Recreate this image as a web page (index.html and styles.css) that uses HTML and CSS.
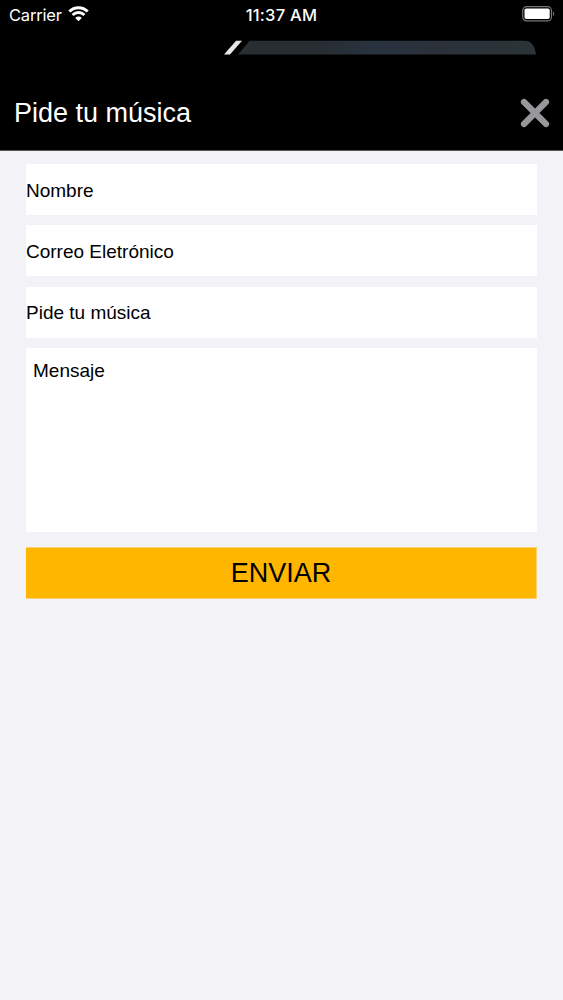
FILE: index.html
```html
<!DOCTYPE html>
<html lang="es">
<head>
  <meta charset="UTF-8">
  <meta name="viewport" content="width=device-width, initial-scale=1.0, viewport-fit=cover">
  <title>Pide tu música</title>
  <link rel="stylesheet" href="styles.css">
</head>
<body>
  <header class="header">
    <!-- Barra de estado -->
    <div class="status-bar">
      <div class="carrier">
        <span>Carrier</span>
        <svg class="wifi" width="21" height="16" viewBox="0 0 22 16">
          <path d="M1.4 5.4a13.6 13.6 0 0 1 19.2 0" fill="none" stroke="#fff" stroke-width="3.2"/>
          <path d="M4.8 9a8.8 8.8 0 0 1 12.4 0" fill="none" stroke="#fff" stroke-width="3"/>
          <path d="M11 15.6l-3.4-3.5a4.8 4.8 0 0 1 6.8 0z" fill="#fff"/>
        </svg>
      </div>
      <span class="time">11:37 AM</span>
      <svg class="battery" width="33" height="16" viewBox="0 0 33 16">
        <rect x=".7" y=".7" width="28.8" height="14.2" rx="4" fill="none" stroke="#77777a" stroke-width="1.2"/>
        <rect x="2.5" y="2.5" width="25.2" height="10.6" rx="1.8" fill="#fff"/>
        <path d="M31 5.3q2.4 2.5 0 5z" fill="#77777a"/>
      </svg>
    </div>

    <svg class="banner" width="314" height="15" viewBox="0 0 314 15">
      <defs>
        <linearGradient id="barFill">
          <stop offset="0" stop-color="#292e31"/>
          <stop offset=".27" stop-color="#272d32"/>
          <stop offset=".46" stop-color="#283340"/>
          <stop offset=".65" stop-color="#2a313a"/>
          <stop offset="1" stop-color="#2b3438"/>
        </linearGradient>
      </defs>
      <path d="M12 .8h6L6 14.4H0z" fill="#e6e6e6"/>
      <path d="M25.5.8H301q9 0 11 13.6H14z" fill="url(#barFill)"/>
    </svg>

    <div class="title-bar">
      <h1>Pide tu música</h1>
      <button type="button" class="close" aria-label="Cerrar">
        <svg width="30" height="30" viewBox="0 0 30 30">
          <path d="M4 4l22 22M26 4L4 26" stroke="#98989a" stroke-width="6.2" stroke-linecap="round"/>
        </svg>
      </button>
    </div>
  </header>

  <!-- Formulario de pedido -->
  <form class="form">
    <input type="text" placeholder="Nombre">
    <input type="email" placeholder="Correo Eletrónico">
    <input type="text" placeholder="Pide tu música">
    <textarea placeholder="Mensaje"></textarea>
    <button type="button" class="send">ENVIAR</button>
  </form>
</body>
</html>
```

FILE: styles.css
```css
* { box-sizing: border-box; margin: 0; padding: 0; }
body {
  min-height: 100vh;
  font-family: "Liberation Sans", Arial, sans-serif;
  background: #f3f2f6; color: #000;
}

/* Cabecera */
.header { height: 151px; background: #000; color: #fff; border-bottom: 1px solid #555; }
.status-bar {
  display: grid; grid-template-columns: 1fr auto 1fr; align-items: center;
  height: 29px; padding: 0 8px 0 9px;
  font-family: Inter, sans-serif; font-size: 16.5px;
}
.carrier { display: flex; align-items: center; gap: 6px; letter-spacing: -.2px; }
.wifi { margin-top: -2px; }
.time { margin-left: -1px; font-weight: 500; letter-spacing: .25px; }
.battery { justify-self: end; margin-top: -1px; }
.banner { display: block; margin: 11px 0 0 224px; }
.title-bar {
  display: flex; align-items: center; justify-content: space-between;
  height: 94px; padding: 21px 13px 0 14px;
}
h1 { padding-top: 2px; font-size: 27px; font-weight: normal; }
.close { width: 30px; height: 30px; background: none; border: none; cursor: pointer; }
.close svg { display: block; }

/* Formulario */
.form { display: flex; flex-direction: column; padding: 13px 26px 0; }
input, textarea {
  width: 100%; border: none; border-radius: 0; outline: none;
  background: #fff; color: #000;
  font-family: inherit; font-size: 19px;
}
input { height: 51px; padding-top: 2px; margin-bottom: 10.3px; }
textarea { height: 184px; padding: 12px 7px; resize: none; }
::placeholder { color: #000; opacity: 1; }
.send {
  height: 52px; margin-top: 15px; padding-top: 2px;
  background: #ffb600; color: #000;
  border: 1px solid #fcd070; border-width: 1px 1px 1px 0;
  font-family: inherit; font-size: 27px; cursor: pointer;
}
```
